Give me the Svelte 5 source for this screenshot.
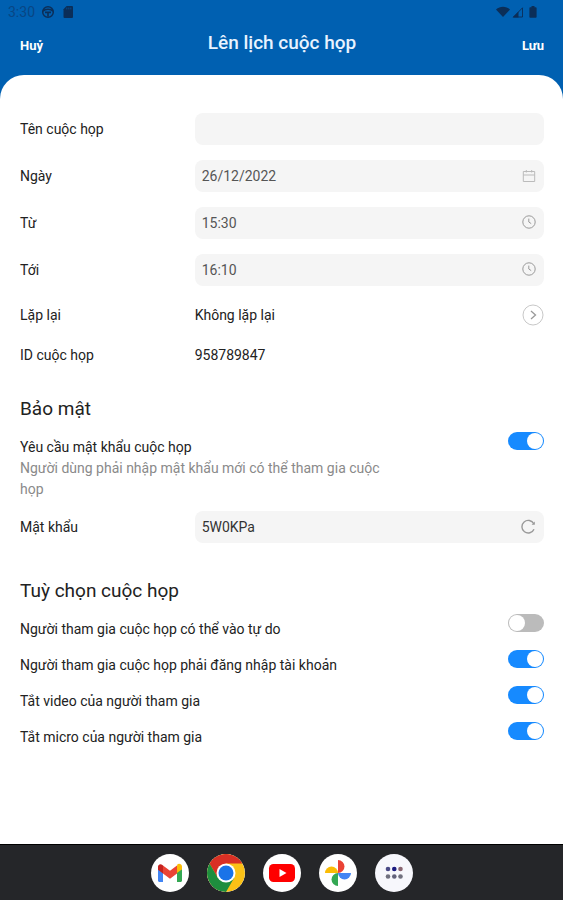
<script lang="ts">
	let title = $state('');
	let date = $state('26/12/2022');
	let from = $state('15:30');
	let to = $state('16:10');
	let password = $state('5W0KPa');
	let requirePassword = $state(true);

	let options = $state([
		{ id: 'free-join', label: 'Người tham gia cuộc họp có thể vào tự do', on: false },
		{ id: 'login', label: 'Người tham gia cuộc họp phải đăng nhập tài khoản', on: true },
		{ id: 'video', label: 'Tắt video của người tham gia', on: true },
		{ id: 'micro', label: 'Tắt micro của người tham gia', on: true }
	]);
</script>

{#snippet clock()}
	<svg class="field_icon" viewBox="0 0 16 16" aria-hidden="true">
		<circle cx="8" cy="7" r="6.2" />
		<path d="M7.8 3.6V7l2.4 1.6" />
	</svg>
{/snippet}

<div class="screen">
	<div class="status_bar">
		<div class="status_group">
			<span class="time">3:30</span>
			<svg class="status_icon" viewBox="0 0 14 14" aria-hidden="true">
				<circle cx="7" cy="7" r="5.3" fill="none" stroke="currentColor" stroke-width="1.5" />
				<path d="M2 6.2c2-2.6 8-2.6 10 0M4 7.4h6M7 7.4v4" fill="none" stroke="currentColor" stroke-width="1.6" />
			</svg>
			<svg class="status_icon card" viewBox="0 0 14 14" aria-hidden="true">
				<path d="M5.6 1H11a1 1 0 0 1 1 1v10a1 1 0 0 1-1 1H3.5a1 1 0 0 1-1-1V4.2z" fill="currentColor" />
				<path d="M5.8 2.6v1.8M7.8 2.6v1.8M9.8 2.6v1.8" stroke="#0060b1" stroke-width=".6" />
			</svg>
		</div>
		<div class="status_group right">
			<svg class="status_icon" viewBox="0 0 14 14" aria-hidden="true">
				<path d="M0 4.5c4-3.8 10-3.8 14 0L7 12z" fill="currentColor" />
			</svg>
			<svg class="status_icon" viewBox="0 0 14 14" aria-hidden="true">
				<path d="M1.5 12.5 7.5 6.5v6z" fill="currentColor" />
				<path d="M2.5 12 11.5 2.8V12z" fill="none" stroke="currentColor" stroke-width=".9" />
			</svg>
			<svg class="status_icon" viewBox="0 0 14 14" aria-hidden="true">
				<path d="M5.5 1h3v1.3h1.3c.5 0 .8.3.8.8V12c0 .5-.3.8-.8.8H4.200c-.5 0-.8-.3-.8-.8V3.100c0-.5.3-.8.8-.8h1.300z" fill="currentColor" />
			</svg>
		</div>
	</div>

	<header>
		<button class="action" type="button">Huỷ</button>
		<h1>Lên lịch cuộc họp</h1>
		<button class="action" type="button">Lưu</button>
	</header>

	<main>
		<div class="fields">
			<div class="row">
				<label for="title">Tên cuộc họp</label>
				<div class="field"><input id="title" type="text" bind:value={title} /></div>
			</div>
			<div class="row">
				<label for="date">Ngày</label>
				<div class="field">
					<input id="date" type="text" bind:value={date} />
					<svg class="field_icon light" viewBox="0 0 16 16" aria-hidden="true">
						<path d="M2.300 3.500h11.400v10H2.300zM2.300 7h11.400M5.300 2v2.500M10.700 2v2.500" />
					</svg>
				</div>
			</div>
			<div class="row">
				<label for="from">Từ</label>
				<div class="field">
					<input id="from" type="text" bind:value={from} />
					{@render clock()}
				</div>
			</div>
			<div class="row">
				<label for="to">Tới</label>
				<div class="field">
					<input id="to" type="text" bind:value={to} />
					{@render clock()}
				</div>
			</div>
		</div>

		<div class="row info">
			<span>Lặp lại</span>
			<div class="repeat">
				<span>Không lặp lại</span>
				<button class="more" type="button" aria-label="Chọn lặp lại">
					<svg viewBox="0 0 22 22" aria-hidden="true">
						<circle cx="11" cy="11" r="10" stroke="#c8c8c8" />
						<path d="m9 7 4.500 4L9 15" stroke="#999" stroke-width="1.300" />
					</svg>
				</button>
			</div>
		</div>
		<div class="row info">
			<span>ID cuộc họp</span>
			<span>958789847</span>
		</div>

		<section>
			<h2>Bảo mật</h2>
			<div class="security">
				<div class="security_text">
					<label for="require">Yêu cầu mật khẩu cuộc họp</label>
					<p>Người dùng phải nhập mật khẩu mới có thể tham gia cuộc họp</p>
				</div>
				<input id="require" class="switch" type="checkbox" bind:checked={requirePassword} />
			</div>
			<div class="row">
				<label for="password">Mật khẩu</label>
				<div class="field">
					<input id="password" class="dark" type="text" bind:value={password} />
					<button class="refresh" type="button" aria-label="Tạo mật khẩu mới">
						<svg viewBox="0 0 18 18" aria-hidden="true">
							<path d="M15 11.200A6.300 6.300 0 1 1 14.800 5.800" stroke="#999" stroke-width="1.400" />
							<path d="M15.800 3.600v3.200h-3.200z" fill="#999" />
						</svg>
					</button>
				</div>
			</div>
		</section>

		<section>
			<h2>Tuỳ chọn cuộc họp</h2>
			<ul>
				{#each options as option (option.id)}
					<li>
						<label for={option.id}>{option.label}</label>
						<input id={option.id} class="switch" type="checkbox" bind:checked={option.on} />
					</li>
				{/each}
			</ul>
		</section>
	</main>

	<nav>
		<button class="app" type="button" aria-label="Gmail">
			<svg viewBox="0 0 38 38" aria-hidden="true">
				<path d="M7 15v11.500c0 .8.700 1.500 1.500 1.500H12V17z" fill="#4285f4" />
				<path d="M26 17v11h3.500c.8 0 1.500-.7 1.500-1.500V15z" fill="#34a853" />
				<path d="M26 12V19l5-3.800v-2.400c0-2.500-2.800-3.800-4.700-2.400z" fill="#fbbc04" />
				<path d="M12 19.500v-8l7 5.300 7-5.300v8l-7 5.300z" fill="#ea4335" />
				<path d="M7 12.800v2.900L12 19.500v-8l-.6-.6C9.500 9.300 7 10.300 7 12.800z" fill="#c5221f" />
			</svg>
		</button>
		<button class="app" type="button" aria-label="Chrome">
			<svg viewBox="0 0 38 38" aria-hidden="true">
				<circle cx="19" cy="19" r="19" fill="#fbc116" />
				<path d="M19 9.500h16.500A19 19 0 0 0 2.500 9.500L10.800 23.800 19 19z" fill="#d93025" />
				<path d="M2.500 9.500A19 19 0 0 0 19 38l8.200-14.200L19 19l-8.200 4.800z" fill="#1e8e3e" />
				<circle cx="19" cy="19" r="9.500" fill="#fff" />
				<circle cx="19" cy="19" r="7.500" fill="#1a73e8" />
			</svg>
		</button>
		<button class="app" type="button" aria-label="YouTube">
			<svg viewBox="0 0 38 38" aria-hidden="true">
				<rect x="6" y="10" width="26" height="18" rx="4.500" fill="#f00" />
				<path d="m16.500 15 7 4-7 4z" fill="#fff" />
			</svg>
		</button>
		<button class="app" type="button" aria-label="Google Photos">
			<svg viewBox="0 0 38 38" aria-hidden="true">
				<path d="M19 6a6.500 6.500 0 0 1 0 13z" fill="#ea4335" />
				<path d="M32 19a6.500 6.500 0 0 1-13 0z" fill="#4285f4" />
				<path d="M19 32a6.500 6.500 0 0 1 0-13z" fill="#34a853" />
				<path d="M6 19a6.500 6.500 0 0 1 13 0z" fill="#fbbc04" />
			</svg>
		</button>
		<button class="app drawer" type="button" aria-label="Ứng dụng">
			<svg viewBox="0 0 38 38" aria-hidden="true">
				<circle cx="13" cy="15" r="2.300" fill="#4a4a86" />
				<circle cx="19.300" cy="15" r="2.300" fill="#1c1c80" />
				<circle cx="25.500" cy="15" r="2.300" fill="#8a6672" />
				<circle cx="13" cy="22.500" r="2.300" fill="#70707e" />
				<circle cx="19.300" cy="22.500" r="2.300" fill="#62627a" />
				<circle cx="25.500" cy="22.500" r="2.300" fill="#70707e" />
			</svg>
		</button>
	</nav>
</div>

<style>
	:global(body) {
		margin: 0;
	}

	.screen {
		background-color: #0060b1;
		color: #222;
		display: flex;
		flex-direction: column;
		font-family: Roboto, sans-serif;
		font-size: 14px;
		line-height: 21px;
		min-height: 100vh;
	}

	button {
		background: none;
		border: 0;
		cursor: pointer;
		font: inherit;
		padding: 0;
	}

	svg {
		display: block;
		fill: none;
	}

	.status_bar {
		color: #0b2e58;
		display: flex;
		height: 24px;
		justify-content: space-between;
		padding: 0 23px 0 8px;
	}

	.status_group {
		align-items: center;
		display: flex;
		gap: 6px;
	}

	.status_group.right {
		gap: 1px;
	}

	.time {
		color: #084684;
	}

	.status_icon {
		height: 14px;
		width: 14px;
	}

	header {
		align-items: center;
		box-sizing: border-box;
		display: grid;
		grid-template-columns: 1fr auto 1fr;
		height: 51px;
		padding: 0 19px 8px 20px;
	}

	h1 {
		color: #e8f3ff;
		font-size: 19px;
		font-weight: 500;
		line-height: 24px;
		margin: 0;
		padding-bottom: 5px;
	}

	.action {
		color: #fff;
		font-size: 13px;
		font-weight: 700;
		justify-self: start;
	}

	.action:last-child {
		justify-self: end;
	}

	main {
		background-color: #fff;
		border-radius: 24px 24px 0 0;
		flex-grow: 1;
		padding: 38px 19px 24px 20px;
	}

	.fields {
		display: grid;
		gap: 15px;
		margin-bottom: 9px;
	}

	.row {
		align-items: center;
		display: grid;
		grid-template-columns: 1fr 2fr;
	}

	.info {
		height: 40px;
	}

	.field {
		align-items: center;
		background-color: #f5f5f5;
		border-radius: 8px;
		display: flex;
		height: 32px;
		padding: 0 7px;
	}

	.field input {
		background: none;
		border: 0;
		color: #555;
		flex-grow: 1;
		font: inherit;
		min-width: 0;
		outline: none;
		padding: 0;
	}

	.field input.dark {
		color: #333;
	}

	.field_icon {
		height: 16px;
		stroke: #999;
		width: 16px;
	}

	.light {
		stroke: #bbb;
	}

	.refresh svg {
		height: 18px;
		width: 18px;
	}

	.repeat {
		align-items: center;
		display: flex;
		justify-content: space-between;
	}

	.more svg {
		height: 22px;
		width: 22px;
	}

	section {
		margin-bottom: 36px;
	}

	section:last-child {
		margin-bottom: 0;
	}

	h2 {
		font-size: 19px;
		font-weight: 400;
		line-height: 24px;
		margin: 0 0 11px;
	}

	.info + section {
		margin-top: 22px;
	}

	.security {
		align-items: flex-start;
		display: flex;
		justify-content: space-between;
		margin-bottom: 11px;
	}

	.security_text {
		flex-basis: 70%;
		padding-top: 5px;
	}

	.security p {
		color: #8a8a8a;
		margin: 0;
	}

	.switch {
		appearance: none;
		background-color: #bbb;
		border-radius: 9px;
		cursor: pointer;
		display: flex;
		flex-shrink: 0;
		height: 18px;
		margin: 0;
		padding: 1px;
		width: 36px;
	}

	.switch::before {
		background-color: #fff;
		border-radius: 50%;
		content: '';
		height: 16px;
		width: 16px;
	}

	.switch:checked {
		background-color: #168aff;
		justify-content: flex-end;
	}

	ul {
		list-style: none;
		margin: 0;
		padding: 0;
	}

	li {
		align-items: flex-start;
		display: flex;
		justify-content: space-between;
		min-height: 36px;
	}

	li label {
		padding-top: 5px;
	}

	nav {
		align-items: center;
		background-color: #252629;
		border-top: 1px solid #000;
		box-sizing: border-box;
		display: flex;
		gap: 18px;
		height: 56px;
		justify-content: center;
	}

	.app {
		background-color: #fff;
		border-radius: 50%;
		height: 38px;
		overflow: hidden;
		width: 38px;
	}

	.drawer {
		background-color: #f7f7fc;
	}
</style>
